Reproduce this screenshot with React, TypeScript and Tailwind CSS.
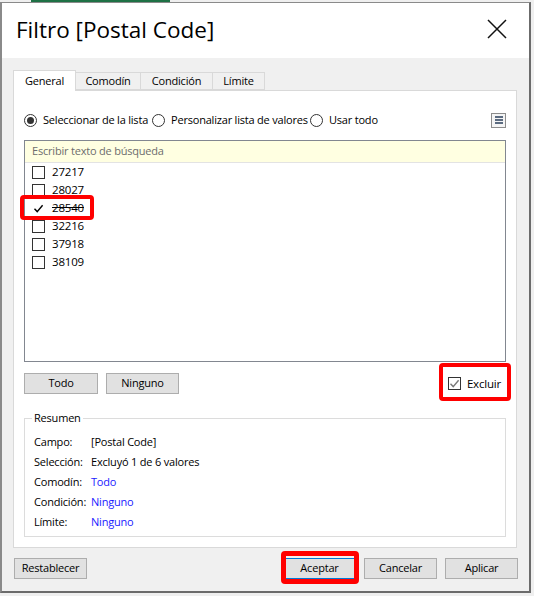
import { ReactNode } from "react";

const codes = ["27217", "28027", "28540", "32216", "37918", "38109"];

const summary = [
  { label: "Campo:", value: "[Postal Code]", link: false },
  { label: "Selección:", value: "Excluyó 1 de 6 valores", link: false },
  { label: "Comodín:", value: "Todo", link: true },
  { label: "Condición:", value: "Ninguno", link: true },
  { label: "Límite:", value: "Ninguno", link: true },
];

function CheckMark({ color = "#000" }: { color?: string }) {
  return (
    <svg width="11" height="11" viewBox="0 0 11 11" fill="none">
      <path d="M1.5 5.8 L4.2 8.6 L9.6 2.2" stroke={color} strokeWidth="1.4" />
    </svg>
  );
}

function Radio({ selected }: { selected?: boolean }) {
  return (
    <span className="flex h-[13px] w-[13px] shrink-0 items-center justify-center rounded-full border border-[#333] bg-white">
      {selected && <span className="h-[7px] w-[7px] rounded-full bg-[#333]" />}
    </span>
  );
}

interface ButtonProps {
  children: ReactNode;
  width?: string;
  isDefault?: boolean;
}

function WinButton({ children, width = "w-[73px]", isDefault }: ButtonProps) {
  return (
    <button
      className={`${width} flex h-[21px] items-center justify-center border bg-[#e1e1e1] text-[11px] text-black ${
        isDefault ? "border-[#0078d7]" : "border-[#adadad]"
      }`}
    >
      {children}
    </button>
  );
}

function Highlight({ className }: { className: string }) {
  return (
    <div
      className={`pointer-events-none absolute rounded-[4px] border-[4px] border-[#ff0000] ${className}`}
    />
  );
}

function ValueList() {
  return (
    <div className="ml-[10px] mt-[12px] h-[222px] w-[482px] border border-[#828790]">
      <div className="flex h-[22px] items-center border-b border-[#e3e3e3] bg-[#ffffe1] pl-[7px] text-[11px] text-[#6d6d6d]">
        Escribir texto de búsqueda
      </div>
      {codes.map((code, i) => {
        const excluded = i === 2;
        return (
          <div key={code} className="relative flex h-[18px] items-center pl-[7px]">
            {excluded ? (
              <span className="flex h-[13px] w-[13px] items-center justify-center">
                <CheckMark />
              </span>
            ) : (
              <span className="h-[13px] w-[13px] border border-[#333] bg-white" />
            )}
            <span className={`ml-[7px] text-[11.5px] text-black ${excluded ? "line-through" : ""}`}>
              {code}
            </span>
            {excluded && <Highlight className="-left-[5px] -top-[4px] h-[25px] w-[74px]" />}
          </div>
        );
      })}
    </div>
  );
}

function Summary() {
  return (
    <div className="relative ml-[10px] mt-[24px] h-[119px] w-[482px] border border-[#dcdcdc] pl-[9px] pt-[13px]">
      <span className="absolute -top-[9px] left-[7px] bg-white px-[2px] text-[11px] leading-[16px] text-black">
        Resumen
      </span>
      {summary.map((row) => (
        <div key={row.label} className="flex h-[20px] items-center text-[11px]">
          <span className="w-[57px] whitespace-nowrap text-black">{row.label}</span>
          <span className={row.link ? "text-[#1a1aff]" : "text-black"}>{row.value}</span>
        </div>
      ))}
    </div>
  );
}

export default function App() {
  return (
    <div className="relative h-[596px] w-[534px] overflow-hidden bg-[#efefef] font-['Segoe_UI','Open_Sans',sans-serif] tracking-[-0.2px]">
      <div className="flex h-[2px]">
        <div className="ml-[31px] h-[2px] w-[139px] bg-[#1e7145]" />
      </div>

      <div className="flex h-[591px] w-[531px] flex-col border-x-2 border-b-2 border-t border-x-[#8a8a8a] border-b-[#6b6b6b] border-t-[#8a8a8a] border-r-[#6b6b6b]">
        <div className="flex h-[55px] items-start justify-between bg-white pl-[14px] pr-[22px]">
          <h1 className="pt-[12px] text-[22.5px] font-normal leading-[30px] tracking-normal text-black">
            Filtro [Postal Code]
          </h1>
          <svg width="20" height="20" viewBox="0 0 20 20" className="mt-[16px]">
            <path d="M1 1 L19 19 M19 1 L1 19" stroke="#111" strokeWidth="1.5" />
          </svg>
        </div>

        <div className="flex-1 bg-[#f0f0f0] px-[11px] pt-[12px]">
          <div className="flex h-[20px] items-end text-[11px] text-black">
            <div className="relative z-10 -mb-px flex h-[21px] w-[63px] items-center justify-center border border-b-0 border-[#d9d9d9] bg-white">
              General
            </div>
            <div className="flex h-[18px] w-[65px] items-center justify-center border border-l-0 border-[#d9d9d9]">
              Comodín
            </div>
            <div className="flex h-[18px] w-[72px] items-center justify-center border border-l-0 border-[#d9d9d9]">
              Condición
            </div>
            <div className="flex h-[18px] w-[52px] items-center justify-center border border-l-0 border-[#d9d9d9]">
              Límite
            </div>
          </div>

          <div className="h-[458px] w-[504px] border border-[#d9d9d9] bg-white">
            <div className="mt-[21px] flex h-[16px] items-center pl-[10px] pr-[10px] text-[11px] text-black">
              <Radio selected />
              <span className="ml-[6px] w-[104px] whitespace-nowrap">Seleccionar de la lista</span>
              <span className="ml-[5px]">
                <Radio />
              </span>
              <span className="ml-[6px] w-[134px] whitespace-nowrap">Personalizar lista de valores</span>
              <span className="ml-[5px]">
                <Radio />
              </span>
              <span className="ml-[6px] whitespace-nowrap">Usar todo</span>
              <div className="ml-auto flex h-[15px] w-[15px] flex-col items-center justify-center gap-[1px] border border-[#8c8c8c] bg-[#f4f4f4]">
                <span className="h-[2px] w-[8px] bg-[#5b6b80]" />
                <span className="h-[2px] w-[8px] bg-[#5b6b80]" />
                <span className="h-[2px] w-[8px] bg-[#5b6b80]" />
              </div>
            </div>

            <ValueList />

            <div className="ml-[10px] mt-[11px] flex h-[21px] w-[482px] items-center">
              <WinButton width="w-[74px]">Todo</WinButton>
              <span className="ml-[8px]">
                <WinButton>Ninguno</WinButton>
              </span>
              <div className="relative ml-auto mr-[5px] flex h-[21px] items-center gap-[6px] text-[11.5px] text-black">
                <span className="flex h-[13px] w-[13px] items-center justify-center border border-[#333] bg-white">
                  <CheckMark color="#7a7a7a" />
                </span>
                Excluir
                <Highlight className="-left-[9px] -right-[10px] -top-[10px] -bottom-[7px]" />
              </div>
            </div>

            <Summary />
          </div>

          <div className="mt-[10px] flex items-center">
            <span className="ml-px">
              <WinButton>Restablecer</WinButton>
            </span>
            <div className="relative ml-auto">
              <WinButton isDefault>Aceptar</WinButton>
              <Highlight className="-left-[2px] -right-[3px] -top-[7px] -bottom-[5px] border-[5px]" />
            </div>
            <span className="ml-[8px]">
              <WinButton>Cancelar</WinButton>
            </span>
            <span className="ml-[8px]">
              <WinButton>Aplicar</WinButton>
            </span>
          </div>
        </div>
      </div>
    </div>
  );
}
